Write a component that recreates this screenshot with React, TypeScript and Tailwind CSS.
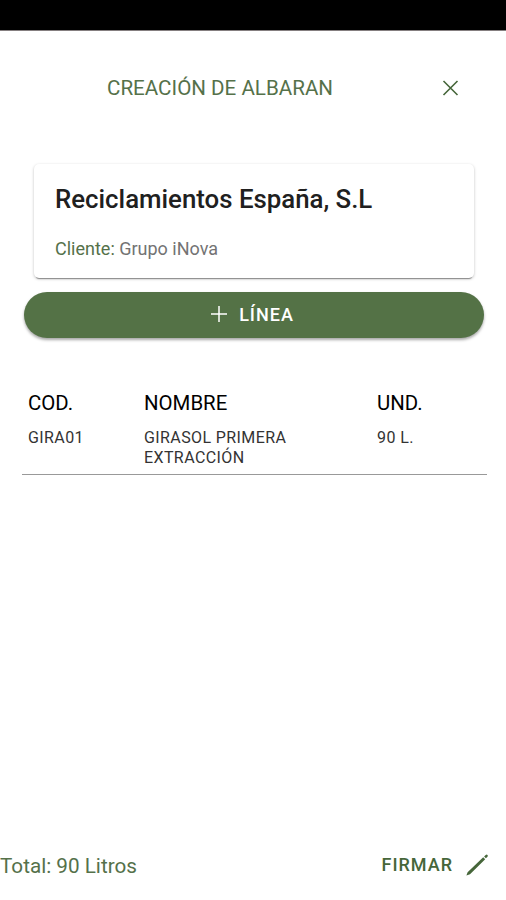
export default function App() {
  return (
    <div className="flex h-[900px] w-[506px] flex-col overflow-hidden bg-white font-['Roboto',sans-serif] text-black">
      <div className="h-[31px] shrink-0 border-b border-[#857f80] bg-black" />
      <header className="flex h-[115px] shrink-0 items-center pb-0.5 pl-[107px] text-[#55714a]">
        <h1 className="w-[334px] whitespace-nowrap text-[20.6px] leading-6">CREACIÓN DE ALBARAN</h1>
        <svg width="20" height="20" viewBox="0 0 20 20" fill="none" stroke="#46663a" strokeWidth="1.6">
          <path d="M2.5 3 16.5 17M16.5 3 2.5 17" />
        </svg>
      </header>
      <main className="flex grow flex-col pt-[18px]">
        <section className="ml-[34px] h-[114px] w-[440px] rounded-[5px] bg-white px-[21px] pt-5 shadow-[0_3px_1px_-2px_rgba(0,0,0,0.35),0_1px_3px_rgba(0,0,0,0.25)]">
          <h2 className="whitespace-nowrap text-[25.8px] font-medium leading-[30px] text-[#202020]">Reciclamientos España, S.L</h2>
          <p className="mt-[23px] whitespace-nowrap text-[18px] leading-6 text-[#737373]"><span className="text-[#55714a]">Cliente:</span> Grupo iNova</p>
        </section>
        <button className="ml-6 mt-[14px] flex h-[46px] w-[460px] items-center justify-center gap-3 rounded-full bg-[#547246] pb-0.5 pr-[3px] text-[18px] font-medium tracking-[1px] text-white shadow-[0_2px_3px_rgba(0,0,0,0.35)]">
          <svg width="16" height="16" viewBox="0 0 16 16" stroke="currentColor" strokeWidth="1.5"><path d="M8 0V16M0 8H16" /></svg>
          <span>LÍNEA</span>
        </button>
        <div className="ml-[22px] mt-[52px] w-[465px] border-b border-[#999] pl-1.5">
          <div className="grid h-[38px] grid-cols-[116px_233px_1fr] text-[20.4px] leading-[26px]">
            <span>COD.</span><span>NOMBRE</span><span>UND.</span>
          </div>
          <div className="grid h-[46px] grid-cols-[116px_233px_1fr] text-[16px] leading-[20px] tracking-[0.4px] text-[#333]">
            <span>GIRA01</span><span>GIRASOL PRIMERA<br />EXTRACCIÓN</span><span>90 L.</span>
          </div>
        </div>
      </main>
      <footer className="flex h-[70px] shrink-0 items-center justify-between pr-[17px] text-[#55714a]">
        <span className="pt-[3px] text-[20.7px]">Total: 90 Litros</span>
        <span className="flex items-center gap-3 pb-px text-[18px] font-medium tracking-[1px] text-[#46663a]">FIRMAR
          <svg width="24" height="24" viewBox="0 0 24 24" fill="currentColor">
            <path d="M1.4 22.6 2.6 19.2 18.2 4.2 20.2 6.2 5 21.3ZM19.1 3.5 20.7 2q1.1-.8 1.8 0t0 1.8L20.9 5.3Z" />
          </svg>
        </span>
      </footer>
    </div>
  );
}
